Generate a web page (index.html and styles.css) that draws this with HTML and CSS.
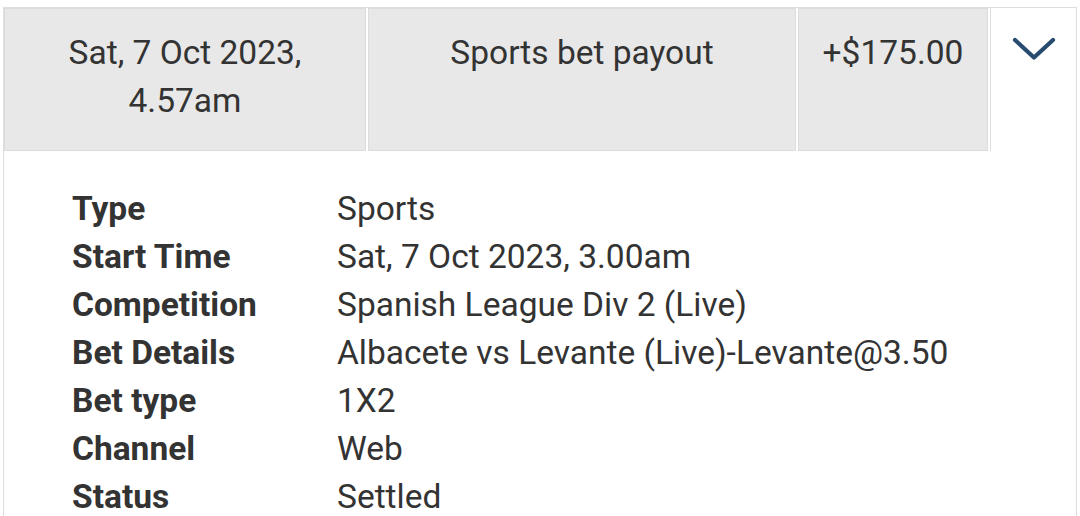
FILE: index.html
```html
<!DOCTYPE html>
<html lang="en">
<head>
  <meta charset="UTF-8">
  <meta name="viewport" content="width=device-width, initial-scale=1.0">
  <title>Transaction</title>
  <link rel="stylesheet" href="styles.css">
</head>
<body>
  <div class="card">
    <div class="summary">
      <div class="cell date">Sat, 7 Oct 2023,<br>4.57am</div>
      <div class="cell desc">Sports bet payout</div>
      <div class="cell amount">+$175.00</div>
      <div class="toggle">
        <svg width="44" height="24" viewBox="0 0 44 24">
          <path d="M3 3 L22 20.5 L41 3" fill="none" stroke="#274c70" stroke-width="4.2" stroke-linecap="round" stroke-linejoin="round"/>
        </svg>
      </div>
    </div>
    <div class="details">
      <div class="label">Type</div><div class="value">Sports</div>
      <div class="label">Start Time</div><div class="value">Sat, 7 Oct 2023, 3.00am</div>
      <div class="label">Competition</div><div class="value">Spanish League Div 2 (Live)</div>
      <div class="label">Bet Details</div><div class="value">Albacete vs Levante (Live)-Levante@3.50</div>
      <div class="label">Bet type</div><div class="value">1X2</div>
      <div class="label">Channel</div><div class="value">Web</div>
      <div class="label">Status</div><div class="value">Settled</div>
    </div>
  </div>
</body>
</html>
```

FILE: styles.css
```css
body {
  margin:0; padding:0;
  background:#fff; color:#333;
  font-family: Roboto, "Noto Sans", sans-serif;
  overflow:hidden;
}
.card {
  margin:7px 3px 0 3px;
  border:1px solid #dedede; border-bottom:none;
  height:600px;
}
.summary { display:flex; gap:2px; height:143px; }
.cell {
  background:#e8e8e8;
  border:1px solid #dcdcdc;
  font-size:33.5px; line-height:48px;
  text-align:center;
  padding-top:20px;
  box-sizing:border-box;
}
.date { width:362px; }
.desc { width:428px; }
.amount { width:190px; }
.toggle {
  flex:1;
  border-left:1px solid #dedede;
  display:flex; justify-content:center; align-items:flex-start;
  padding-top:29px;
}
.details {
  display:grid;
  grid-template-columns:265px 1fr;
  padding:34px 0 0 68px;
  font-size:33.5px; line-height:48px;
}
.label { font-weight:bold; }
```
